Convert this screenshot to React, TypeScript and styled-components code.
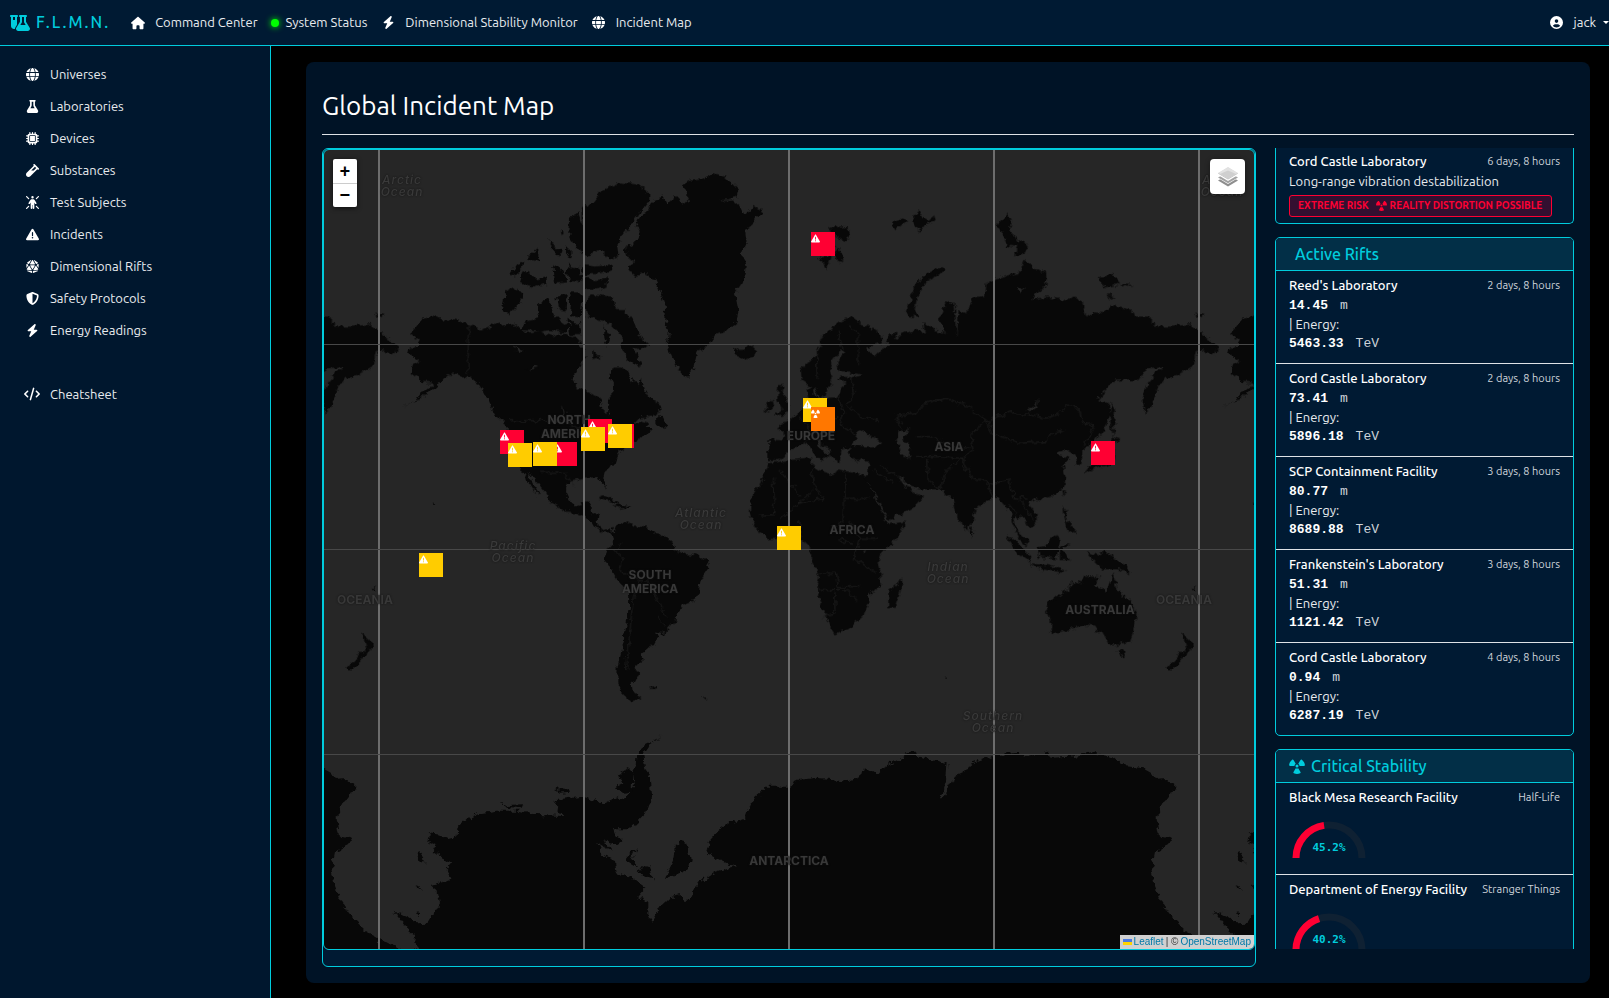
import React from 'react';
import styled, { createGlobalStyle } from 'styled-components';
import {
  FaBolt, FaCircleUser, FaCode, FaDiceD20, FaFlask, FaFlaskVial, FaGlobe, FaHouse, FaMicrochip,
  FaPersonRays, FaRadiation, FaShieldHalved, FaTriangleExclamation, FaVial,
} from 'react-icons/fa6';

const c = {
  cyan: '#00ccdd',
  navy: '#001a33',
  side: '#00172e',
  panel: '#001326',
  head: '#022f47',
  rule: '#dee2e6',
  red: '#ff0033',
  yellow: '#ffcc00',
  orange: '#ff7700',
  sea: '#262626',
  land: '#080808',
};
const mapHeight = 'calc(100vh - 197px)';

const GlobalStyle = createGlobalStyle`
  * { box-sizing: border-box; }
  body { margin: 0; background: #000; color: #e9ecef; font: 13px/19px Ubuntu, "Noto Sans", sans-serif; }
  a { color: inherit; text-decoration: none; }
  ul, h1, h2, h3, p { margin: 0; padding: 0; font-weight: 400; list-style: none; }
  button { font: inherit; border: 0; padding: 0; cursor: pointer; }
`;

const Shell = styled.div`
  min-height: 100vh;
  display: grid;
  grid-template: 46px 1fr / 271px minmax(0, 1fr);
`;

const TopBar = styled.header`
  grid-column: 1 / -1;
  display: flex;
  align-items: center;
  gap: 11px;
  padding-left: 10px;
  background: ${c.navy};
  border-bottom: 1px solid ${c.cyan};
  white-space: nowrap;
`;

const Brand = styled.a`
  display: flex;
  align-items: center;
  gap: 6px;
  margin-right: 7px;
  color: ${c.cyan};
  font-size: 16px;
  font-weight: 500;
  letter-spacing: 2px;
`;

const TopLink = styled.a`
  display: flex;
  align-items: center;
  gap: 7px;
`;

const IconSlot = styled.span`
  width: 20px;
  display: flex;
  justify-content: center;
  color: #fff;
`;

const StatusDot = styled.span`
  width: 8px;
  height: 8px;
  margin: 0 0 0 2px;
  border-radius: 50%;
  background: #00ff00;
  box-shadow: 0 0 6px #00ff00;
`;

const UserButton = styled.button`
  margin-left: auto;
  display: flex;
  align-items: center;
  gap: 7px;
  background: none;
  color: inherit;
`;

const Caret = styled.span`
  border: 3px solid transparent;
  border-top-color: #fff;
  border-bottom: 0;
`;

const Sidebar = styled.nav`
  padding: 12px 0 0 22px;
  background: ${c.side};
  border-right: 1px solid ${c.cyan};
`;

const SideList = styled.ul`
  margin-bottom: 32px;
`;

const SideLink = styled.a`
  display: flex;
  align-items: center;
  gap: 8px;
  height: 32px;
`;

const Main = styled.main`
  padding: 16px 19px 15px 35px;
`;

const Panel = styled.section`
  padding: 16px;
  background: ${c.panel};
  border-radius: 8px;
`;

const Title = styled.h1`
  padding: 12px 0;
  margin-bottom: 13px;
  border-bottom: 1px solid ${c.rule};
  color: #fff;
  font-size: 26px;
  line-height: 32px;
`;

const Columns = styled.div`
  display: grid;
  grid-template-columns: minmax(0, 1fr) 299px;
  align-items: start;
  gap: 19px;
`;

const MapCard = styled.div`
  padding-bottom: 16px;
  background: ${c.navy};
  border: 1px solid ${c.cyan};
  border-radius: 6px;
`;

const MapView = styled.div`
  position: relative;
  height: ${mapHeight};
  min-height: 420px;
  overflow: hidden;
  background: ${c.sea};
  border: 1px solid ${c.cyan};
  border-radius: 6px;
`;

const MapCenter = styled.div`
  position: absolute;
  left: 50%;
  top: 50%;
`;

const WorldSvg = styled.svg`
  position: absolute;
  left: -1230px;
  top: -500px;
`;

const MapLabel = styled.span<{ $x: number; $y: number; $ocean?: boolean }>`
  position: absolute;
  left: ${p => p.$x}px;
  top: ${p => p.$y}px;
  transform: translate(-50%, -50%);
  color: ${p => (p.$ocean ? '#3a3a3a' : '#383838')};
  font: ${p => (p.$ocean ? 'italic 500 12px/12px' : '700 12px/14px')} Inter, sans-serif;
  letter-spacing: ${p => (p.$ocean ? 1 : 0)}px;
  text-align: center;
  text-shadow: 0 0 2px #141414;
  white-space: pre;
`;

const Pin = styled.button<{ $x: number; $y: number; $tone: string }>`
  position: absolute;
  left: ${p => p.$x}px;
  top: ${p => p.$y}px;
  width: 24px;
  height: 24px;
  padding: 2px 0 0;
  display: flex;
  align-items: flex-start;
  background: ${p => p.$tone};
  color: #fff;
  font-size: 9px;
`;

const ZoomControl = styled.div`
  position: absolute;
  left: 9px;
  top: 9px;
  width: 24px;
  border-radius: 2px;
  overflow: hidden;
  box-shadow: 0 1px 5px rgba(0, 0, 0, 0.65);
`;

const ZoomButton = styled.button`
  display: block;
  width: 24px;
  height: 24px;
  padding-top: 2px;
  background: #fff;
  color: #000;
  font: bold 18px/22px "Liberation Mono", monospace;
  & + & { border-top: 1px solid #ccc; padding-top: 0; }
`;

const LayersButton = styled.button`
  position: absolute;
  right: 9px;
  top: 9px;
  width: 35px;
  height: 35px;
  display: grid;
  place-items: center;
  background: #fff;
  border-radius: 4px;
  box-shadow: 0 1px 5px rgba(0, 0, 0, 0.4);
`;

const Attribution = styled.p`
  position: absolute;
  right: 0;
  bottom: 0;
  padding: 0 3px;
  display: flex;
  align-items: center;
  gap: 2px;
  background: #d0d0d0;
  color: #333;
  font: 10px/14px "Liberation Sans", sans-serif;
  a { color: #0078a8; }
`;

const Feed = styled.div`
  height: ${mapHeight};
  min-height: 420px;
  overflow: hidden;
  display: flex;
  flex-direction: column;
  gap: 13px;
`;

const Card = styled.section<{ $continued?: boolean }>`
  flex: none;
  overflow: hidden;
  background: ${c.navy};
  border: 1px solid ${c.cyan};
  border-top-width: ${p => (p.$continued ? 0 : 1)}px;
  border-radius: ${p => (p.$continued ? '0 0 5px 5px' : '5px')};
`;

const CardTitle = styled.h2`
  display: flex;
  align-items: center;
  gap: 6px;
  height: 33px;
  padding: 0 13px;
  background: ${c.head};
  border-bottom: 1px solid ${c.cyan};
  color: ${c.cyan};
  font-size: 16px;
  font-weight: 500;
`;

const Entry = styled.article<{ $tight?: boolean }>`
  padding: ${p => (p.$tight ? '4px 13px 6px' : '5px 13px 10px')};
  & + & { border-top: 1px solid ${c.rule}; }
`;

const EntryHead = styled.div`
  display: flex;
  justify-content: space-between;
  height: 20px;
`;

const Place = styled.h3`
  color: #fff;
  font-size: 13px;
  font-weight: 500;
`;

const Meta = styled.small`
  color: #ced4da;
  font-size: 11px;
`;

const Reading = styled.p`
  color: #ced4da;
  font-family: "Liberation Mono", monospace;
  b { margin-right: 12px; color: #fff; }
`;

const Energy = styled.p``;

const RiskBadge = styled.span`
  display: inline-flex;
  align-items: center;
  gap: 3px;
  height: 22px;
  margin-top: 4px;
  padding: 0 9px 2px 8px;
  background: #330f30;
  border: 1px solid ${c.red};
  border-radius: 3px;
  color: ${c.red};
  font-size: 10px;
  font-weight: 700;
  white-space: nowrap;
  vertical-align: top;
  svg { margin-left: 4px; }
`;

const GaugeSvg = styled.svg`
  display: block;
  text { font: bold 11px "DejaVu Sans Mono", monospace; fill: ${c.cyan}; text-anchor: middle; }
`;

const topLinks = [
  { text: 'Command Center', icon: FaHouse, size: 14 },
  { text: 'System Status' },
  { text: 'Dimensional Stability Monitor', icon: FaBolt, size: 13 },
  { text: 'Incident Map', icon: FaGlobe, size: 13 },
];

const sideLinks = [
  { text: 'Universes', icon: FaGlobe },
  { text: 'Laboratories', icon: FaFlask },
  { text: 'Devices', icon: FaMicrochip },
  { text: 'Substances', icon: FaVial },
  { text: 'Test Subjects', icon: FaPersonRays },
  { text: 'Incidents', icon: FaTriangleExclamation },
  { text: 'Dimensional Rifts', icon: FaDiceD20 },
  { text: 'Safety Protocols', icon: FaShieldHalved },
  { text: 'Energy Readings', icon: FaBolt },
];

const rifts = [
  { place: "Reed's Laboratory", age: '2 days, 8 hours', size: '14.45', energy: '5463.33' },
  { place: 'Cord Castle Laboratory', age: '2 days, 8 hours', size: '73.41', energy: '5896.18' },
  { place: 'SCP Containment Facility', age: '3 days, 8 hours', size: '80.77', energy: '8689.88' },
  { place: "Frankenstein's Laboratory", age: '3 days, 8 hours', size: '51.31', energy: '1121.42' },
  { place: 'Cord Castle Laboratory', age: '4 days, 8 hours', size: '0.94', energy: '6287.19' },
];

const stability = [
  { place: 'Black Mesa Research Facility', universe: 'Half-Life', value: 45.2 },
  { place: 'Department of Energy Facility', universe: 'Stranger Things', value: 40.2 },
];

// Pin positions in pixels from the map's centre (0°, 0°).
const pins = [
  { x: 22, y: -318, tone: c.red },
  { x: -289, y: -120, tone: c.red },
  { x: -281, y: -107, tone: c.yellow },
  { x: -236, y: -108, tone: c.red },
  { x: -256, y: -108, tone: c.yellow },
  { x: -201, y: -131, tone: c.red },
  { x: -208, y: -123, tone: c.yellow },
  { x: -179, y: -126, tone: c.red },
  { x: -181, y: -126, tone: c.yellow },
  { x: -370, y: 3, tone: c.yellow },
  { x: 14, y: -152, tone: c.yellow },
  { x: 22, y: -143, tone: c.orange, radiation: true },
  { x: 302, y: -109, tone: c.red },
  { x: -12, y: -24, tone: c.yellow },
];

const labels = [
  { text: 'NORTH\nAMERICA', x: -220, y: -123 },
  { text: 'SOUTH\nAMERICA', x: -139, y: 32 },
  { text: 'EUROPE', x: 22, y: -114 },
  { text: 'ASIA', x: 160, y: -103 },
  { text: 'AFRICA', x: 63, y: -20 },
  { text: 'AUSTRALIA', x: 311, y: 60 },
  { text: 'OCEANIA', x: 395, y: 50 },
  { text: 'OCEANIA', x: -424, y: 50 },
  { text: 'ANTARCTICA', x: 0, y: 311 },
  { text: 'Arctic\nOcean', x: -387, y: -364, ocean: true },
  { text: 'Arctic\nOcean', x: 433, y: -364, ocean: true },
  { text: 'Pacific\nOcean', x: -276, y: 2, ocean: true },
  { text: 'Atlantic\nOcean', x: -88, y: -31, ocean: true },
  { text: 'Indian\nOcean', x: 159, y: 23, ocean: true },
  { text: 'Southern\nOcean', x: 204, y: 172, ocean: true },
];

const americas = [
  'M265,600 L290,585 L300,568 L270,550 L285,535 L300,515 L335,495 L360,505 L400,508 L440,520 L480,542 L510,530 L535,515 L550,530 L575,520 L600,535 L625,550 L660,545 L700,558 L730,548 L760,560 L775,575 L790,590 L800,620 L778,645 L757,690 L770,712 L810,725 L840,745 L847,775 L862,790 L868,765 L865,745 L882,725 L882,700 L872,685 L878,650 L900,650 L925,665 L937,692 L955,705 L965,685 L975,720 L990,745 L1020,765 L1022,785 L995,800 L960,802 L935,830 L965,812 L985,818 L975,835 L1000,835 L985,850 L960,862 L935,880 L900,900 L885,930 L880,945 L855,965 L850,985 L858,1018 L845,1000 L835,980 L800,985 L770,990 L745,995 L738,1020 L745,1050 L765,1070 L790,1060 L800,1048 L812,1050 L808,1070 L815,1090 L838,1096 L835,1125 L850,1140 L875,1135 L885,1148 L850,1146 L820,1128 L800,1103 L770,1088 L740,1085 L690,1055 L682,1035 L660,1005 L635,975 L618,965 L658,1035 L640,1022 L612,975 L595,945 L575,925 L562,885 L560,830 L530,800 L510,765 L490,725 L475,700 L455,685 L430,678 L400,670 L370,685 L350,705 L320,735 L280,752 L255,768 L290,742 L325,715 L340,698 L310,695 L275,672 L278,645 L300,635 L270,612Z',
  'M885,1130 L915,1115 L940,1127 L985,1130 L1005,1152 L1030,1155 L1055,1175 L1065,1200 L1095,1212 L1130,1215 L1160,1235 L1168,1255 L1142,1290 L1138,1320 L1125,1352 L1090,1368 L1075,1385 L1070,1410 L1045,1440 L1035,1452 L1008,1445 L1018,1465 L1008,1485 L980,1490 L978,1505 L962,1510 L968,1525 L952,1550 L943,1560 L955,1570 L935,1600 L938,1625 L965,1645 L935,1655 L908,1635 L892,1600 L893,1550 L905,1500 L917,1440 L927,1370 L928,1320 L903,1303 L885,1280 L867,1245 L852,1220 L862,1195 L882,1175 L878,1150Z',
  'M915,295 L950,275 L963,245 L947,237 L960,205 L985,182 L1000,150 L1030,140 L1045,165 L1065,135 L1090,160 L1110,150 L1088,102 L1112,92 L1145,88 L1180,70 L1215,80 L1255,120 L1250,140 L1200,154 L1242,152 L1262,168 L1275,195 L1300,165 L1325,182 L1305,213 L1275,240 L1280,280 L1265,310 L1278,350 L1265,400 L1245,430 L1255,480 L1250,515 L1215,545 L1185,555 L1160,592 L1132,602 L1120,655 L1107,685 L1080,665 L1060,630 L1040,585 L1047,545 L1033,510 L1035,470 L1022,430 L1005,390 L975,370 L940,375 L922,350 L945,335 L922,320Z',
  'M1240,590 L1260,600 L1290,585 L1312,602 L1300,622 L1272,632 L1252,618Z',
  'M788,170 L820,158 L848,122 L900,98 L950,103 L985,130 L985,155 L940,215 L910,250 L892,285 L895,315 L870,330 L840,300 L805,320 L778,300 L748,260 L750,200 L775,190 L788,225Z',
  'M790,345 L830,350 L870,343 L874,360 L840,372 L790,372Z M792,385 L830,390 L860,385 L860,410 L830,418 L792,415Z',
  'M797,450 L820,433 L875,440 L892,480 L915,480 L945,520 L955,555 L985,580 L960,600 L940,590 L966,650 L930,635 L903,600 L910,565 L870,520 L835,512 L800,495Z',
  'M605,540 L620,515 L655,505 L648,470 L685,445 L700,495 L750,530 L740,545 L690,540 L660,545Z M548,480 L560,420 L585,415 L610,430 L600,460 L565,495Z',
  'M568,375 L590,345 L613,335 L610,352 L585,375Z M600,395 L610,360 L650,385 L680,380 L680,400 L645,415 L615,405Z M700,345 L735,365 L738,398 L705,400Z M755,430 L788,430 L782,505 L750,495Z M708,440 L743,432 L740,480 L715,475Z',
  'M685,270 L725,300 L718,320 L692,290Z M738,290 L755,305 L750,325 L738,310Z M620,325 L655,293 L655,330 L640,335Z M745,345 L780,355 L785,395 L755,390 L740,370Z M722,240 L732,250 L725,255Z',
  'M745,510 L780,520 L785,555 L755,555Z M820,600 L845,625 L820,630Z M850,530 L870,560 L860,590 L850,560Z',
  'M830,1045 L850,1036 L880,1050 L905,1066 L870,1056Z M880,1070 L905,1062 L932,1070 L900,1076Z',
  'M1005,815 L1022,795 L1043,830 L1012,828Z M338,1058 L348,1062 L342,1066Z M165,493 L190,490 L194,497 L172,500Z',
  'M990,1611 L1010,1608 L1008,1615 L995,1617Z M1148,1638 L1160,1645 L1156,1648Z',
];

const oldWorld = [
  'M-35,868 L12,872 L15,855 L-8,830 L10,818 L30,812 L55,790 L72,775 L85,745 L80,718 L98,705 L105,735 L120,750 L165,745 L180,735 L185,712 L200,698 L175,690 L182,680 L215,682 L250,675 L210,668 L180,667 L172,640 L197,608 L180,600 L150,640 L145,665 L160,690 L142,715 L137,735 L118,745 L110,715 L88,705 L65,690 L62,655 L90,635 L112,610 L120,575 L150,540 L185,510 L215,500 L240,520 L270,530 L300,550 L307,580 L270,590 L255,588 L270,610 L298,612 L320,585 L330,550 L350,553 L345,572 L370,550 L410,540 L435,545 L430,520 L470,540 L495,552 L480,500 L500,450 L520,460 L524,500 L530,560 L533,480 L560,490 L578,445 L615,437 L622,395 L690,375 L718,370 L735,330 L760,355 L798,365 L800,400 L755,450 L800,440 L865,452 L880,440 L905,455 L920,500 L945,487 L975,490 L990,465 L1050,478 L1065,500 L1110,500 L1125,530 L1180,530 L1230,522 L1257,545 L1290,570 L1320,595 L1295,612 L1255,602 L1245,645 L1190,678 L1155,685 L1132,720 L1118,760 L1098,788 L1088,750 L1095,710 L1145,650 L1100,655 L1075,690 L1000,692 L955,748 L985,760 L992,800 L970,840 L942,878 L910,895 L908,945 L890,945 L885,915 L865,900 L835,905 L832,915 L868,922 L848,945 L858,985 L850,1015 L820,1037 L780,1050 L765,1045 L745,1058 L770,1095 L770,1120 L745,1133 L735,1115 L712,1095 L702,1115 L710,1140 L735,1165 L742,1188 L715,1165 L698,1125 L690,1085 L668,1060 L650,1035 L620,1050 L582,1085 L575,1125 L555,1142 L532,1100 L520,1045 L500,1035 L480,1018 L415,1018 L390,1010 L355,975 L370,1010 L398,1022 L432,1040 L405,1070 L330,1110 L320,1100 L300,1060 L265,1000 L252,985 L268,965 L272,935 L220,932 L203,905 L215,890 L185,900 L178,940 L155,925 L145,900 L115,870 L108,878 L150,918 L122,935 L80,878 L55,890 L22,905 L-5,930 L-35,930Z',
  'M-35,940 L30,930 L95,925 L100,950 L130,968 L160,975 L175,958 L250,975 L268,1010 L298,1070 L325,1122 L375,1115 L352,1160 L300,1215 L293,1235 L302,1270 L302,1305 L265,1335 L265,1362 L248,1400 L205,1438 L160,1450 L150,1435 L130,1380 L108,1318 L118,1275 L90,1225 L90,1190 L70,1170 L20,1163 L-30,1168 L-62,1148 L-90,1095 L-88,1045 L-50,985Z',
  'M362,1282 L368,1300 L345,1373 L325,1375 L325,1325 L350,1305Z',
  'M-5,705 L10,705 L5,722 L20,745 L32,790 L-15,797 L5,782 L-8,750Z M-42,762 L-22,745 L-18,772 L-42,785Z',
  'M378,485 L390,455 L397,425 L430,375 L485,348 L495,360 L440,395 L412,440 L404,478 L418,505 L395,500Z',
  'M150,235 L190,228 L212,245 L195,275 L180,265 L165,255Z M165,290 L180,300 L193,325 L175,340Z M120,318 L155,320 L140,360Z',
  'M650,225 L680,192 L695,215 L690,238 L710,275 L728,268 L745,290 L735,308 L705,318 L712,290 L680,285 L668,250Z',
  'M335,215 L365,205 L378,215 L350,238Z M395,205 L415,178 L425,200 L445,210 L465,195 L470,210 L440,220 L425,245 L405,225Z',
  'M960,380 L1000,375 L1020,400 L970,412Z M1022,402 L1055,405 L1040,412Z M980,435 L1005,443 L990,448Z M1245,492 L1270,490 L1262,500Z',
  'M992,755 L1005,780 L1003,820 L998,865 L990,800Z M998,862 L1018,868 L998,882Z M912,970 L930,948 L985,942 L995,890 L1005,900 L1000,940 L950,955 L918,970Z',
  'M570,1130 L583,1150 L572,1158Z M678,1160 L700,1167 L750,1215 L750,1238 L718,1215Z M750,1240 L800,1245 L858,1260 L845,1268 L770,1255Z',
  'M770,1190 L800,1185 L825,1153 L842,1168 L828,1225 L780,1220Z M840,1195 L872,1183 L852,1200 L868,1230 L840,1230Z',
  'M920,1205 L950,1218 L975,1205 L1020,1232 L1055,1270 L1012,1258 L970,1258 L945,1235Z M848,1070 L862,1085 L855,1110 L885,1130 L885,1155 L862,1140 L850,1100Z M848,1020 L858,1022 L850,1040Z',
  'M805,1355 L845,1335 L885,1295 L905,1300 L920,1278 L960,1282 L945,1305 L980,1325 L998,1270 L1015,1320 L1050,1355 L1073,1395 L1050,1475 L1010,1485 L985,1480 L965,1445 L955,1450 L940,1430 L910,1425 L870,1440 L825,1454 L812,1440 L815,1420 L800,1375Z',
  'M1010,1500 L1038,1505 L1028,1528Z M1205,1450 L1225,1470 L1243,1482 L1215,1515 L1185,1555 L1162,1555 L1200,1510 L1220,1492Z M495,1584 L506,1584 L500,1590Z M1235,1320 L1250,1312 L1245,1322Z',
];

const antarctica = [
  'M177,1195 L215,1215 L250,1230 L300,1228 L283,1208 L285,1185 L260,1165 L220,1112 L260,1130 L290,1150 L325,1148 L360,1090 L352,1050 L335,1035 L395,1018 L380,990 L395,972 L340,932 L350,915 L325,905 L330,880 L360,885 L385,897 L410,890 L412,865 L440,840 L480,820 L530,812 L600,812 L650,825 L730,828 L702,795 L705,778 L740,775 L790,770 L820,780 L850,792 L880,778 L920,768 L945,740 L938,690 L950,680 L952,650 L975,612 L1025,588 L1000,602 L970,645 L975,680 L990,720 L993,770 L978,820 L950,850 L920,868 L880,868 L890,890 L908,900 L890,915 L850,903 L878,935 L835,912 L850,945 L885,960 L890,1000 L930,1010 L978,1045 L955,1070 L985,1085 L985,1130 L995,1145 L1020,1100 L1050,1072 L1085,1065 L1090,1092 L1110,1072 L1130,1030 L1160,1015 L1185,998 L1245,980 L1205,962 L1158,940 L1168,900 L1195,870 L1230,847 L1275,832 L1290,790 L1325,760 L1335,737 L1405,737 L1440,720 L1490,713 L1530,717 L1580,722 L1630,703 L1635,685 L1668,705 L1690,680 L1740,657 L1765,635 L1790,635 L1795,650 L1880,665 L1875,725 L1860,775 L1868,775 L1905,710 L1935,697 L1950,672 L2020,647 L2095,638 L2130,648 L2180,632 L2195,653 L2250,650 L2320,640 L2380,652 L2410,675 L2460,680 L2495,700 L2510,722 L2545,720 L2570,740 L2550,775 L2530,787 L2510,830 L2520,890 L2555,895 L2540,920 L2505,940 L2495,990 L2505,1040 L2520,1080 L2550,1125 L2595,1170 L2637,1195 L2637,1500 L177,1500Z',
  'M1060,960 L1065,915 L1085,903 L1105,915 L1112,960 L1105,990 L1035,1018 L1045,990Z M920,950 L950,920 L935,955 L960,985 L925,965Z M950,995 L990,970 L998,1018 L975,1010Z M285,940 L298,935 L320,970 L305,970Z',
  'M888,745 L915,725 L890,705 L925,685 L940,700 L938,755 L905,758Z M705,750 L745,745 L750,755 L720,758Z M535,785 L560,795 L610,793 L600,805 L560,800Z M285,1037 L310,1045 L295,1045Z M288,1115 L302,1120 L295,1128Z',
];

const lakes = [
  'M215,885 L230,850 L250,840 L265,858 L290,865 L310,887 L260,890Z M350,870 L357,845 L385,838 L370,862 L392,895 L390,927 L365,915Z',
  'M740,783 L765,765 L775,740 L770,770 L748,787Z M-770,600 L-800,590 L-785,610Z M-760,660 L-735,650 L-725,655Z M-652,765 L-640,790 L-645,795Z M245,1195 L258,1198 L252,1210Z M710,415 L735,410 L720,430Z',
];

const borders = [
  'M-935,520 L-935,675 M-815,812 L-640,812 L-620,830 L-560,850',
  'M-720,970 L-650,970 L-620,1005 M-470,1175 L-500,1200 L-470,1225 L-480,1260 L-430,1290 L-390,1295 L-370,1350 L-340,1400 M-420,1290 L-440,1340 L-450,1440 L-460,1560 M-370,1400 L-340,1430',
  'M95,950 L100,1000 L130,1045 L55,1060 L0,1110 M100,1020 L50,1065 M195,970 L195,1045 L270,1045 M190,1045 L190,1110 L150,1140 M-20,985 L-15,1095 L-60,1095 M0,960 L60,1040 M60,1160 L60,1110 M115,1270 L170,1270 L175,1310 L240,1310 M108,1318 L200,1320 M165,1325 L165,1390 L130,1400 M200,1320 L230,1350 M220,1225 L290,1270 M210,1110 L240,1165 L290,1165 M240,1165 L225,1225 M175,1170 L220,1180',
  'M345,800 L410,790 L430,760 L500,745 L560,765 L620,812 L700,785 L800,805 L840,790 L860,765 L900,780 L905,820 L945,825 L910,885 M620,812 L640,850 L720,880 L800,875 L820,845 L855,840 M620,812 L570,855 L580,900 L545,925 L570,980 L640,1000 L690,990 L700,1040 L740,1045 M345,800 L370,840 M405,860 L450,860 L520,890 L570,895 M410,920 L470,920 L545,925 M440,930 L445,990 L480,1015 M545,925 L500,960 L480,1015 M620,1000 L640,1040 M300,950 L355,975 M280,960 L340,1000 M690,1060 L710,1095 M720,1050 L760,1110',
  'M125,560 L110,620 L112,690 M175,545 L190,600 M205,525 L235,560 L235,650 M215,682 L220,730 L200,760 L240,800 L295,815 M175,735 L190,790 L180,830 L230,850 M100,780 L130,800 L175,800 M60,800 L90,840 L130,850',
];

const World = () => (
  <WorldSvg width={2460} height={1000} aria-hidden="true">
    <defs>
      <filter id="coast" filterUnits="userSpaceOnUse" x="0" y="-300" width="2900" height="3000" colorInterpolationFilters="sRGB">
        <feTurbulence type="fractalNoise" baseFrequency="0.05" numOctaves="3" seed="4" result="n" />
        <feDisplacementMap in="SourceGraphic" in2="n" scale="24" xChannelSelector="R" yChannelSelector="G" />
        <feGaussianBlur stdDeviation="1.500" />
      </filter>
      <g id="world" transform="scale(.3333)">
        <g filter="url(#coast)">
          <g fill={c.land}>
            {americas.map(d => <path key={d} d={d} />)}
            <g transform="translate(1380 0)">{oldWorld.map(d => <path key={d} d={d} />)}</g>
            <g transform="translate(0 1170)">{antarctica.map(d => <path key={d} d={d} />)}</g>
          </g>
          <g transform="translate(1380 0)">
            <g fill={c.sea}>{lakes.map(d => <path key={d} d={d} />)}</g>
            <g fill="none" stroke="#1e1e1e" strokeWidth="3">{borders.map(d => <path key={d} d={d} />)}</g>
          </g>
        </g>
      </g>
    </defs>
    {[-820, 0, 820].map(shift => (
      <use key={shift} href="#world" x={761 + shift} y={100} />
    ))}
    {[-5, -4, -3, -2, -1, 0, 1, 2, 3, 4, 5].map(i => (
      <rect key={i} x={1229 + i * 205} width="2" height="1000" fill="#6d6d6d" />
    ))}
    {[-2, -1, 0, 1, 2].map(i => (
      <rect key={i} y={499 + i * 205} width="2460" height="1" fill="#484848" />
    ))}
  </WorldSvg>
);

const LayersIcon = () => (
  <svg width="22" height="22" viewBox="0 0 22 22" aria-hidden="true">
    <path d="M1 14.500 11 9l10 5.500L11 20.500Z" fill="#8e8e8e" />
    <path d="M1 12 11 6.500 21 12 11 18Z" fill="#fff" />
    <path d="M1 11.500 11 6l10 5.500L11 17.300Z" fill="#a2a2a2" />
    <path d="M1 9 11 3.500 21 9 11 15Z" fill="#fff" />
    <path d="M1 7.500 11 1.500l10 6L11 13.500Z" fill="#b9b9b9" />
    <path d="M1 7 11 1l10 6-10 5.800Z" fill="#e2e2e2" />
    <path d="M11 4.500 19 8l-8 4.800L3 8Z" fill="#cfcfcf" />
  </svg>
);

const Gauge = ({ value }: { value: number }) => {
  const arc = 'M7 50a33 33 0 0 1 66 0';
  return (
    <GaugeSvg width="80" height="56" role="img" aria-label={`Stability ${value}%`}>
      <path d={arc} fill="none" stroke="#0f2133" strokeWidth="7" />
      <path d={arc} fill="none" stroke={c.red} strokeWidth="7" pathLength="100" strokeDasharray={`${value} 100`} />
      <text x="40" y="43">{value}%</text>
    </GaugeSvg>
  );
};

export default function App() {
  return (
    <Shell>
      <GlobalStyle />
      <TopBar>
        <Brand href="#"><FaFlaskVial size={20} />F.L.M.N.</Brand>
        {topLinks.map(({ text, icon: Icon, size }) => (
          <TopLink key={text} href="#">
            {Icon ? <IconSlot><Icon size={size} /></IconSlot> : <StatusDot />}
            {text}
          </TopLink>
        ))}
        <UserButton>
          <IconSlot><FaCircleUser size={13} /></IconSlot>jack<Caret />
        </UserButton>
      </TopBar>
      <Sidebar>
        <SideList>
          {sideLinks.map(({ text, icon: Icon }) => (
            <li key={text}>
              <SideLink href="#"><IconSlot><Icon size={13} /></IconSlot>{text}</SideLink>
            </li>
          ))}
        </SideList>
        <SideLink href="#"><IconSlot><FaCode size={16} /></IconSlot>Cheatsheet</SideLink>
      </Sidebar>
      <Main>
        <Panel>
          <Title>Global Incident Map</Title>
          <Columns>
            <MapCard>
              <MapView>
                <MapCenter>
                  <World />
                  {labels.map(l => (
                    <MapLabel key={l.text + l.x} $x={l.x} $y={l.y} $ocean={l.ocean}>{l.text}</MapLabel>
                  ))}
                  {pins.map(p => (
                    <Pin key={`${p.x},${p.y}`} $x={p.x} $y={p.y} $tone={p.tone} aria-label="Incident">
                      {p.radiation ? <FaRadiation /> : <FaTriangleExclamation />}
                    </Pin>
                  ))}
                </MapCenter>
                <ZoomControl>
                  <ZoomButton aria-label="Zoom in">+</ZoomButton>
                  <ZoomButton aria-label="Zoom out">−</ZoomButton>
                </ZoomControl>
                <LayersButton aria-label="Layers"><LayersIcon /></LayersButton>
                <Attribution>
                  <svg width="9" height="6" aria-hidden="true">
                    <path fill="#4c7be1" d="M0 0h9v3H0z" />
                    <path fill="#ffd500" d="M0 3h9v3H0z" />
                  </svg>
                  <a href="#">Leaflet</a>| ©<a href="#">OpenStreetMap</a>
                </Attribution>
              </MapView>
            </MapCard>
            <Feed>
              <Card $continued>
                <Entry $tight>
                  <EntryHead><Place>Cord Castle Laboratory</Place><Meta>6 days, 8 hours</Meta></EntryHead>
                  <p>Long-range vibration destabilization</p>
                  <RiskBadge>EXTREME RISK<FaRadiation size={11} />REALITY DISTORTION POSSIBLE</RiskBadge>
                </Entry>
              </Card>
              <Card>
                <CardTitle><span />Active Rifts</CardTitle>
                {rifts.map(r => (
                  <Entry key={r.energy}>
                    <EntryHead><Place>{r.place}</Place><Meta>{r.age}</Meta></EntryHead>
                    <Reading><b>{r.size}</b>m</Reading>
                    <Energy>| Energy:</Energy>
                    <Reading><b>{r.energy}</b>TeV</Reading>
                  </Entry>
                ))}
              </Card>
              <Card>
                <CardTitle><FaRadiation size={16} />Critical Stability</CardTitle>
                {stability.map(s => (
                  <Entry key={s.place}>
                    <EntryHead><Place>{s.place}</Place><Meta>{s.universe}</Meta></EntryHead>
                    <Gauge value={s.value} />
                  </Entry>
                ))}
              </Card>
            </Feed>
          </Columns>
        </Panel>
      </Main>
    </Shell>
  );
}
